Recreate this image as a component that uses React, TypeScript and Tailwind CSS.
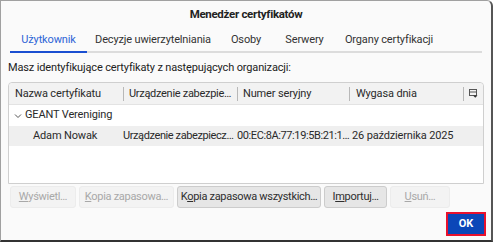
import React from "react";

const font = { fontFamily: 'Roboto, "Liberation Sans", sans-serif' };

function Btn({ children, disabled, w }: { children: React.ReactNode; disabled?: boolean; w: string }) {
  return (
    <div
      className={`${w} h-[22px] rounded-[3px] border flex items-center justify-center text-[11px] tracking-[-0.3px] whitespace-nowrap ${
        disabled ? "bg-[#f3f3f3] border-[#ececec] text-[#a8a8a8]" : "bg-[#e6e6e6] border-[#cccccc] text-[#2e2e2e]"
      }`}
    >
      {children}
    </div>
  );
}

export default function App() {
  return (
    <div className="w-[494px] h-[243px] bg-white overflow-hidden whitespace-nowrap" style={font}>
      <div className="w-[493px] h-[242px] bg-[#fafafa] border-l border-t border-[#a0a0a0] border-r-2 border-r-[#555] border-b-2 border-b-[#333] rounded-tr-[6px] flex flex-col">
        <div className="h-[27px] flex items-center justify-center text-[11.5px] tracking-[-0.3px] font-bold text-[#222] pt-[1px]">
          Menedżer certyfikatów
        </div>
        <div className="mx-[9px] mt-[3px] h-[22px] border-b-2 border-[#dcdcdc] flex text-[11px] tracking-[-0.15px] leading-[14px] text-[#333]">
          <div className="w-[77px] flex justify-center pt-[2px] border-b-2 border-[#1a4fd1] -mb-[2px] text-[#2d64d6]">
            Użytkownik
          </div>
          <div className="w-[132px] flex justify-center pt-[2px]">Decyzje uwierzytelniania</div>
          <div className="w-[54px] flex justify-center pt-[2px]">Osoby</div>
          <div className="w-[63px] flex justify-center pt-[2px]">Serwery</div>
          <div className="w-[106px] flex justify-center pt-[2px]">Organy certyfikacji</div>
        </div>
        <div className="ml-[7px] mt-[8px] text-[11px] tracking-[-0.15px] text-[#222] leading-[14px]">
          Masz identyfikujące certyfikaty z następujących organizacji:
        </div>
        <div className="mx-[7px] mt-[7px] h-[102px] border border-[#cfcfcf] rounded-t-[4px] bg-white flex flex-col text-[11px] tracking-[-0.15px] text-[#2a2a2a]">
          <div className="h-[22px] bg-[#f2f2f2] border-b border-[#e3e3e3] flex items-center rounded-t-[4px]">
            <div className="w-[115px] pl-[6px] border-r border-[#b8b8b8] h-[14px] leading-[14px]">Nazwa certyfikatu</div>
            <div className="w-[114px] pl-[5px] border-r border-[#b8b8b8] h-[14px] leading-[14px] tracking-[-0.3px]">Urządzenie zabezpie…</div>
            <div className="w-[112px] pl-[5px] border-r border-[#b8b8b8] h-[14px] leading-[14px]">Numer seryjny</div>
            <div className="w-[114px] pl-[6px] border-r border-[#b8b8b8] h-[14px] leading-[14px]">Wygasa dnia</div>
            <div className="flex-1 flex justify-center">
              <svg width="9" height="9" viewBox="0 0 9 9">
                <rect x="0.5" y="0.5" width="7" height="6" fill="none" stroke="#555" />
                <line x1="0.5" y1="3" x2="7.5" y2="3" stroke="#555" />
                <path d="M4 6.5 L8.5 6.5 L6.25 8.8 Z" fill="#333" />
              </svg>
            </div>
          </div>
          <div className="h-[21px] flex items-center pl-[5px]">
            <svg width="8" height="8" viewBox="0 0 8 8" className="mr-[3px]">
              <path d="M1 2.5 L4 5.5 L7 2.5" fill="none" stroke="#555" strokeWidth="1" />
            </svg>
            GEANT Vereniging
          </div>
          <div className="h-[20px] bg-[#efefef] flex items-center">
            <div className="w-[114px] pl-[24px]">Adam Nowak</div>
            <div className="w-[114px] tracking-[-0.4px]">Urządzenie zabezpiecz…</div>
            <div className="w-[115px] tracking-[-0.4px]">00:EC:8A:77:19:5B:21:1…</div>
            <div>26 października 2025</div>
          </div>
        </div>
        <div className="ml-[9px] mt-[2px] flex gap-[3px]">
          <Btn w="w-[66px]" disabled><span><u>W</u>yświetl…</span></Btn>
          <Btn w="w-[95px]" disabled><span><u>K</u>opia zapasowa…</span></Btn>
          <Btn w="w-[144px]"><span>K<u>o</u>pia zapasowa wszystkich…</span></Btn>
          <Btn w="w-[63px]"><span>I<u>m</u>portuj…</span></Btn>
          <Btn w="w-[60px]" disabled><span><u>U</u>suń…</span></Btn>
        </div>
        <div className="flex justify-end mr-[5px] mt-[4px]">
          <div className="w-[40px] h-[24px] border-2 border-[#e8112d] bg-[#0b47b8] text-white text-[11px] font-bold flex items-center justify-center">
            OK
          </div>
        </div>
      </div>
    </div>
  );
}
